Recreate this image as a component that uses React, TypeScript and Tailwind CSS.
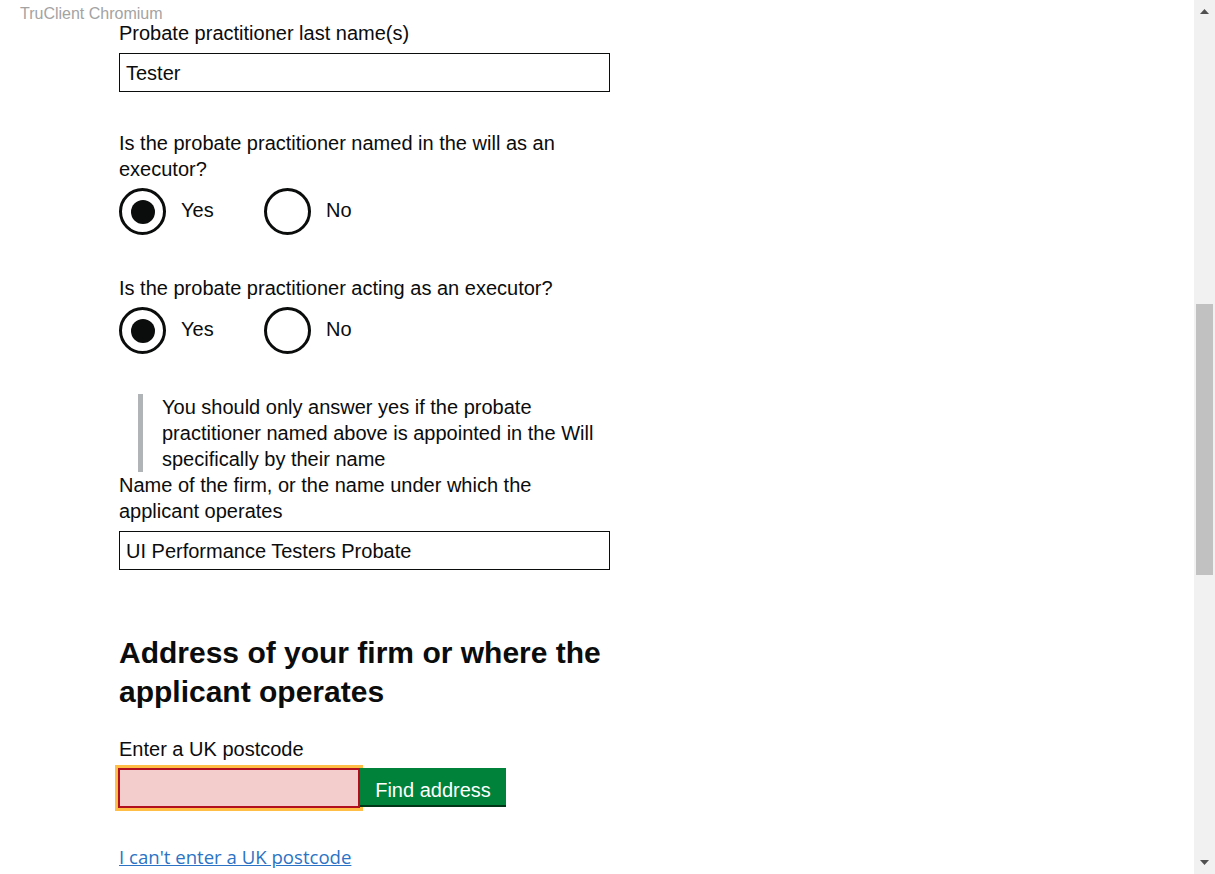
function Radio({ checked, label }: { checked?: boolean; label: string }) {
  return (
    <div className="flex items-center w-[145px]">
      <div className="w-[47px] h-[47px] rounded-full border-[3px] border-[#0b0c0c] flex items-center justify-center shrink-0">
        {checked && <div className="w-[24px] h-[24px] rounded-full bg-[#0b0c0c]" />}
      </div>
      <span className="ml-[15px] -mt-[3px]">{label}</span>
    </div>
  );
}

function App() {
  return (
    <div
      className="relative flex h-[874px] w-[1215px] overflow-hidden bg-white text-[#0b0c0c]"
      style={{ fontFamily: '"Liberation Sans", Arial, sans-serif' }}
    >
      <div className="absolute left-[20px] top-[4px] text-[16px] leading-[20px] text-[#a3a3a3]">
        TruClient Chromium
      </div>

      <main className="flex-1 pl-[119px] pt-[20px] text-[20px] leading-[26px]">
        <div className="w-[491px]">
          <label className="block">Probate practitioner last name(s)</label>
          <div className="mt-[7px] h-[39px] border border-[#0b0c0c] px-[6px] flex items-center">
            Tester
          </div>

          <p className="mt-[38px] w-[460px]">Is the probate practitioner named in the will as an executor?</p>
          <div className="mt-[6px] flex">
            <Radio checked label="Yes" />
            <Radio label="No" />
          </div>

          <p className="mt-[40px]">Is the probate practitioner acting as an executor?</p>
          <div className="mt-[6px] flex">
            <Radio checked label="Yes" />
            <Radio label="No" />
          </div>

          <div className="mt-[40px] ml-[19px] border-l-[5px] border-[#b1b4b6] pl-[19px] pr-[8px]">
            You should only answer yes if the probate practitioner named above is appointed in the Will specifically by
            their name
          </div>

          <label className="block w-[440px]">Name of the firm, or the name under which the applicant operates</label>
          <div className="mt-[7px] h-[39px] border border-[#0b0c0c] px-[6px] flex items-center">
            UI Performance Testers Probate
          </div>

          <h2 className="mt-[63px] text-[30px] leading-[39px] font-bold">
            Address of your firm or where the applicant operates
          </h2>

          <label className="block mt-[25px]">Enter a UK postcode</label>
          <div className="mt-[6px] flex items-start">
            <div className="-ml-[1px] w-[242px] h-[40px] border-2 border-[#b10e1e] bg-[#f3cccc] outline-[3px] outline-solid outline-[#ffbf47]" />
            <button className="h-[37px] w-[146px] pt-[6px] bg-[#00823b] text-white text-[20px] leading-[26px] shadow-[0_2px_0_#003618]">
              Find address
            </button>
          </div>

          <a
            href="#"
            className="block mt-[36px] text-[18.6px] leading-[26px] text-[#2b73c4] underline"
            style={{ fontFamily: '"Open Sans", sans-serif' }}
          >
            I can't enter a UK postcode
          </a>
        </div>
      </main>

      <aside className="w-[21px] h-[874px] bg-[#f1f1f1] flex flex-col items-center justify-between py-[9px]">
        <svg width="9" height="5" viewBox="0 0 9 5">
          <path d="M0 5 L4.5 0 L9 5 Z" fill="#505050" />
        </svg>
        <div className="flex-1 w-full px-[2px] pt-[290px] pb-[285px]">
          <div className="h-full bg-[#c1c1c1]" />
        </div>
        <svg width="9" height="5" viewBox="0 0 9 5">
          <path d="M0 0 L4.5 5 L9 0 Z" fill="#505050" />
        </svg>
      </aside>
    </div>
  );
}

export default App;
